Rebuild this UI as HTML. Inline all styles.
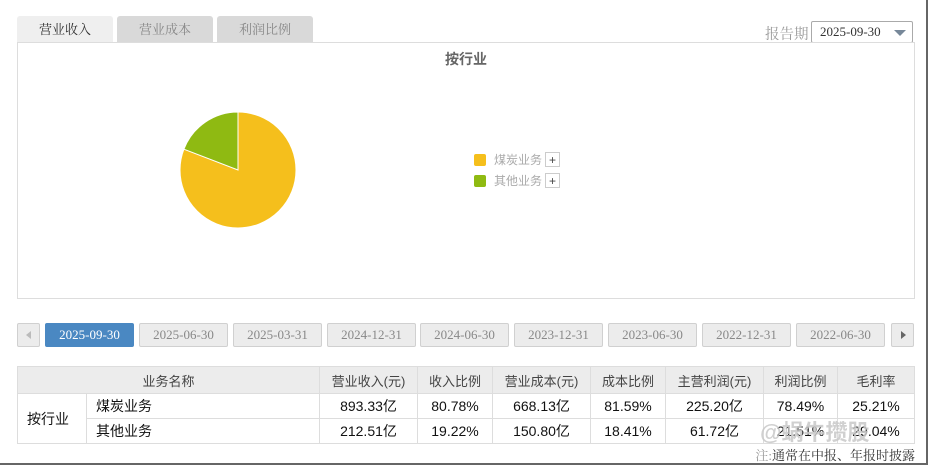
<!DOCTYPE html>
<html><head><meta charset="utf-8"><style>
*{box-sizing:border-box;margin:0;padding:0}
body{width:928px;height:465px;background:#fff;font-family:"Liberation Sans","Noto Sans CJK SC",sans-serif;position:relative;overflow:hidden}
.abs{position:absolute}
.tab{position:absolute;top:16px;height:27px;width:96px;background:#d9d9d9;color:#888;font-size:13px;text-align:center;line-height:27px;border-radius:3px 3px 0 0;font-family:"Liberation Serif","Noto Serif CJK SC",serif}
.btn{position:absolute;top:323px;height:24px;width:89px;border:1px solid #d0d0d0;background:#ececec;color:#888;font-size:13px;text-align:center;line-height:22px;font-family:"Liberation Serif",serif;border-radius:2px}
table{position:absolute;left:17px;top:366px;border-collapse:collapse;font-size:14px;color:#111}
td{border:1px solid #ddd;text-align:center;height:25px;padding:0}
tr.h td{background:#ececec;color:#444;font-size:13px;height:27px}
</style></head><body>
<div class="tab" style="left:17px;background:#efefef;color:#333">营业收入</div>
<div class="tab" style="left:117px">营业成本</div>
<div class="tab" style="left:217px">利润比例</div>
<div class="abs" style="left:765px;top:23px;font-size:14.5px;color:#999;font-family:'Liberation Serif','Noto Serif CJK SC',serif">报告期</div>
<div class="abs" style="left:811px;top:21px;width:102px;height:22px;border:1px solid #aaa;border-radius:2px;font-size:13px;line-height:20px;padding-left:8px;color:#333;font-family:'Liberation Serif',serif">2025-09-30<span style="position:absolute;right:6px;top:8px;border-left:6px solid transparent;border-right:6px solid transparent;border-top:6px solid #778899"></span></div>
<div class="abs" style="left:17px;top:42px;width:898px;height:257px;border:1px solid #ddd"></div>
<div class="abs" style="left:0;top:49px;width:932px;text-align:center;font-size:14px;color:#666;font-weight:bold">按行业</div>
<svg class="abs" style="left:0;top:0" width="928" height="300">
<circle cx="238" cy="170" r="58" fill="#f5bf1c" stroke="#fff" stroke-width="1"/>
<path d="M238 170 L238 112 A58 58 0 0 0 183.9 149.2 Z" fill="#8fba12" stroke="#fff" stroke-width="1"/>
<rect x="474" y="154" width="12" height="12" rx="2" fill="#f5bf1c"/>
<rect x="474" y="175" width="12" height="12" rx="2" fill="#8fba12"/>
<rect x="545.5" y="152.5" width="14" height="14" fill="#fff" stroke="#ccc"/>
<rect x="545.5" y="173.5" width="14" height="14" fill="#fff" stroke="#ccc"/>
<text x="552.5" y="164" font-size="12" text-anchor="middle" fill="#444">+</text>
<text x="552.5" y="185" font-size="12" text-anchor="middle" fill="#444">+</text>
<text x="494" y="164" font-size="12" fill="#aaa" font-family="Noto Sans CJK SC">煤炭业务</text>
<text x="494" y="185" font-size="12" fill="#aaa" font-family="Noto Sans CJK SC">其他业务</text>
</svg>
<div class="btn" style="left:17px;width:23px"><span style="position:absolute;left:8px;top:7px;border-top:4px solid transparent;border-bottom:4px solid transparent;border-right:5px solid #bbb"></span></div>
<div class="btn" style="left:45px;background:#4a88c2;border-color:#4a88c2;color:#fff">2025-09-30</div>
<div class="btn" style="left:139px">2025-06-30</div>
<div class="btn" style="left:233px">2025-03-31</div>
<div class="btn" style="left:327px">2024-12-31</div>
<div class="btn" style="left:420px">2024-06-30</div>
<div class="btn" style="left:514px">2023-12-31</div>
<div class="btn" style="left:608px">2023-06-30</div>
<div class="btn" style="left:702px">2022-12-31</div>
<div class="btn" style="left:796px">2022-06-30</div>
<div class="btn" style="left:891px;width:23px"><span style="position:absolute;left:9px;top:7px;border-top:4px solid transparent;border-bottom:4px solid transparent;border-left:5px solid #666"></span></div>
<table>
<tr class="h"><td colspan="2" style="width:302px">业务名称</td><td style="width:98px">营业收入(元)</td><td style="width:75px">收入比例</td><td style="width:98px">营业成本(元)</td><td style="width:75px">成本比例</td><td style="width:98px">主营利润(元)</td><td style="width:74px">利润比例</td><td style="width:77px">毛利率</td></tr>
<tr><td rowspan="2" style="width:69px;text-align:left;padding-left:9px">按行业</td><td style="text-align:left;padding-left:9px;width:233px">煤炭业务</td><td>893.33亿</td><td>80.78%</td><td>668.13亿</td><td>81.59%</td><td>225.20亿</td><td>78.49%</td><td>25.21%</td></tr>
<tr><td style="text-align:left;padding-left:9px">其他业务</td><td>212.51亿</td><td>19.22%</td><td>150.80亿</td><td>18.41%</td><td>61.72亿</td><td>21.51%</td><td>29.04%</td></tr>
</table>
<div class="abs" style="left:760px;top:415px;font-size:22px;color:rgba(200,200,200,0.85);font-weight:bold">@蜗牛攒股</div>
<div class="abs" style="right:13px;top:445px;font-size:13px;color:#333;font-family:'Liberation Serif','Noto Serif CJK SC',serif;white-space:nowrap"><span style="color:#999">注:</span>通常在中报、年报时披露</div>
<div class="abs" style="left:926px;top:0;width:2px;height:465px;background:#666"></div>
<div class="abs" style="left:0;top:463px;width:928px;height:2px;background:#666"></div>
</body></html>
